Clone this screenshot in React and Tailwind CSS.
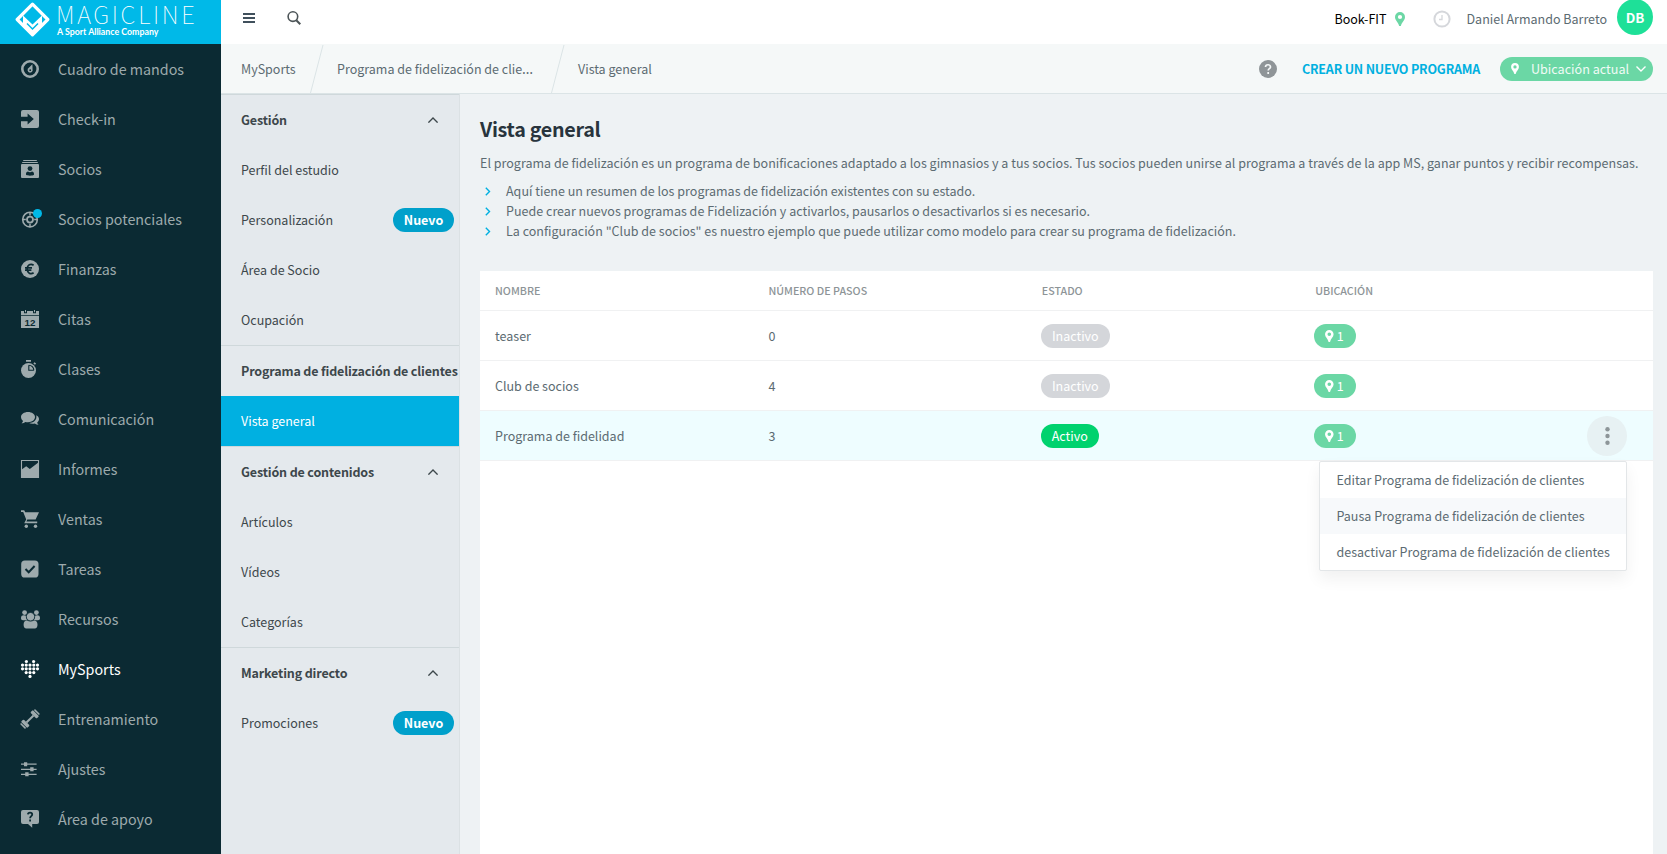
import React from 'react';

const mainNav = [
  { label: 'Cuadro de mandos', icon: 'gauge' },
  { label: 'Check-in', icon: 'checkin' },
  { label: 'Socios', icon: 'members' },
  { label: 'Socios potenciales', icon: 'target', dot: true },
  { label: 'Finanzas', icon: 'euro' },
  { label: 'Citas', icon: 'calendar' },
  { label: 'Clases', icon: 'stopwatch' },
  { label: 'Comunicación', icon: 'chat' },
  { label: 'Informes', icon: 'chart' },
  { label: 'Ventas', icon: 'cart' },
  { label: 'Tareas', icon: 'check' },
  { label: 'Recursos', icon: 'people' },
  { label: 'MySports', icon: 'heart', active: true },
  { label: 'Entrenamiento', icon: 'dumbbell' },
  { label: 'Ajustes', icon: 'sliders' },
  { label: 'Área de apoyo', icon: 'support' },
];

const subNav = [
  {
    title: 'Gestión',
    collapsible: true,
    items: [
      { label: 'Perfil del estudio' },
      { label: 'Personalización', isNew: true },
      { label: 'Área de Socio' },
      { label: 'Ocupación' },
    ],
  },
  {
    title: 'Programa de fidelización de clientes',
    items: [{ label: 'Vista general', active: true }],
  },
  {
    title: 'Gestión de contenidos',
    collapsible: true,
    items: [{ label: 'Artículos' }, { label: 'Vídeos' }, { label: 'Categorías' }],
  },
  {
    title: 'Marketing directo',
    collapsible: true,
    items: [{ label: 'Promociones', isNew: true }],
  },
];

const hints = [
  'Aquí tiene un resumen de los programas de fidelización existentes con su estado.',
  'Puede crear nuevos programas de Fidelización y activarlos, pausarlos o desactivarlos si es necesario.',
  'La configuración "Club de socios" es nuestro ejemplo que puede utilizar como modelo para crear su programa de fidelización.',
];

const programs = [
  { name: 'teaser', steps: 0, active: false, locations: 1 },
  { name: 'Club de socios', steps: 4, active: false, locations: 1 },
  { name: 'Programa de fidelidad', steps: 3, active: true, locations: 1, menuOpen: true },
];

const menuItems = [
  { label: 'Editar Programa de fidelización de clientes' },
  { label: 'Pausa Programa de fidelización de clientes', hover: true },
  { label: 'desactivar Programa de fidelización de clientes' },
];

const BG = '#0b2a33';

// Rows of the dotted heart: [y, list of x]
const heartDots = [
  [1.5, [5.4, 12.6]],
  [5.1, [1.5, 5.2, 9, 12.8, 16.5]],
  [8.8, [1.5, 5.2, 9, 12.8, 16.5]],
  [12.6, [5.2, 9, 12.8]],
  [16.4, [9]],
];

const icons = {
  gauge: (
    <>
      <circle cx="9" cy="9" r="7.7" fill="none" stroke="currentColor" strokeWidth="2.6" />
      <path d="M11.4 4.2 11.6 10.4A2.5 2.5 0 1 1 7.1 8.6Z" />
      <circle cx="9.2" cy="10.2" r="0.9" fill={BG} />
    </>
  ),
  checkin: (
    <path d="M2 0h14a2 2 0 0 1 2 2v14a2 2 0 0 1-2 2H2a2 2 0 0 1-2-2v-4.8h6.6v3.2L12.8 9 6.6 3.6v3.2H0V2a2 2 0 0 1 2-2z" />
  ),
  members: (
    <>
      <path d="M2.2 0h13.6v1H2.2zM1.2 2h15.6v1H1.2zM1 4h16a1 1 0 0 1 1 1v12a1 1 0 0 1-1 1H1a1 1 0 0 1-1-1V5a1 1 0 0 1 1-1z" />
      <circle cx="9" cy="8.6" r="2.4" fill={BG} />
      <path d="M5 14.8c-.3-2.4 1-3 2-3.2 1.2.7 2.8.7 4 0 1 .2 2.3.8 2 3.2-2 1.2-6 1.2-8 0z" fill={BG} />
    </>
  ),
  target: (
    <g fill="none" stroke="currentColor">
      <circle cx="9" cy="9.6" r="7.3" strokeWidth="1.6" />
      <circle cx="9" cy="9.6" r="3" strokeWidth="1.8" />
      <path d="M9 2v3.4M9 13.8v3.4M1.4 9.6h3.4M13.2 9.6h3.4" strokeWidth="1.5" />
    </g>
  ),
  euro: (
    <>
      <circle cx="9" cy="9" r="9" />
      <path
        d="M12.6 5.2C9.6 3.2 6.2 5 6.2 9s3.4 5.8 6.4 3.8M4 7.8h7M4 10.2h6.4"
        fill="none"
        stroke={BG}
        strokeWidth="1.7"
      />
    </>
  ),
  calendar: (
    <>
      <path d="M0 1h3v2.200h3V1h6v2.200h3V1h3v4.200H0z" />
      <path d="M4 0h1v2.200H4zM13 0h1v2.200h-1zM0 6h18v12H0z" />
      <text x="9" y="15.6" textAnchor="middle" fontSize="9.8" fontWeight="700" fontFamily="Liberation Sans, sans-serif" fill={BG}>
        12
      </text>
    </>
  ),
  stopwatch: (
    <>
      <circle cx="7.5" cy="10.5" r="7.5" />
      <path d="M5 0h5v1.8H5zM12.3 3.2l1.4-1 1.4 1.6-1.2 1z" />
      <path d="M7.8 5.2v5h5" fill="none" stroke={BG} strokeWidth="1.1" />
      <path d="M7.8 5.2a5 5 0 0 1 5 5" fill="none" stroke={BG} strokeWidth="1.1" />
    </>
  ),
  chat: (
    <>
      <path d="M7 2c4 0 7 2.2 7 5.1s-3 5.1-7 5.1c-.9 0-1.8-.1-2.6-.3-1 .8-2.3 1.3-3.9 1.3.8-.7 1.400-1.500 1.500-2.300C.8 10 0 8.600 0 7.100 0 4.200 3 2 7 2z" />
      <path d="M15.200 5.200c1.700.8 2.800 2.200 2.800 3.800 0 1.400-.7 2.500-1.800 3.400.1.8.6 1.700 1.400 2.400-1.500 0-2.800-.4-3.800-1.200-2 .5-4.200.3-5.800-.5 4.400-.2 7.400-2.700 7.400-6 0-.7 0-1.300-.2-1.900z" />
    </>
  ),
  chart: (
    <>
      <path d="M.5.5h17v17H.5z" fill="none" stroke="currentColor" strokeWidth="1.1" />
      <path d="M0 10 5.2 6.2 8.8 9 18 2v16H0z" />
    </>
  ),
  cart: (
    <>
      <path d="M0 .2h3.200l1 2H18l-3.400 7.400H6.300l-.9 1.900h10.800v1.700H3.200l2-3.800L2.200 1.900H0z" />
      <circle cx="5.3" cy="16.3" r="1.7" />
      <circle cx="14.5" cy="16.3" r="1.7" />
    </>
  ),
  check: (
    <>
      <rect x="0.2" y="0.5" width="17.3" height="17" rx="3.6" />
      <path d="m4.500 9 3.200 3.200L13.600 6" fill="none" stroke={BG} strokeWidth="2" />
    </>
  ),
  people: (
    <>
      <circle cx="3.6" cy="2.6" r="2.4" />
      <circle cx="15.4" cy="2.6" r="2.4" />
      <path d="M0 8c0-2 1.200-2.700 2.600-2.700 1.200 0 2 .3 2.700.7-.2 1.800 0 3 .9 4.200H2C.7 10.200 0 9.500 0 8zM19 8c0-2-1.200-2.700-2.600-2.700-1.200 0-2 .3-2.700.7.2 1.800 0 3-.9 4.200H17c1.300 0 2-.7 2-2.200z" />
      <circle cx="9.5" cy="6.7" r="4.2" stroke={BG} strokeWidth="0.8" />
      <path d="M2.600 14.800c0-3 1.400-4.200 3.400-4.200 2.200 1.300 4.800 1.300 7 0 2 0 3.500 1.200 3.500 4.200 0 2.400-1 3.600-2.700 3.600H5.300c-1.700 0-2.700-1.200-2.700-3.600z" />
    </>
  ),
  heart: (
    <>
      {heartDots.map(([y, xs]) => xs.map((x) => <circle key={`${x}-${y}`} cx={x} cy={y} r="1.6" />))}
    </>
  ),
  dumbbell: (
    <g transform="rotate(-45 9 9)">
      <path d="M4 8h10v2H4z" />
      <rect x="0.6" y="4.6" width="3.6" height="8.8" rx="1" />
      <rect x="-1.6" y="5.4" width="1.6" height="7.200" rx="0.8" />
      <rect x="13.8" y="4.6" width="3.6" height="8.8" rx="1" />
      <rect x="18" y="5.4" width="1.6" height="7.200" rx="0.8" />
    </g>
  ),
  sliders: (
    <path d="M0 3.600h15.600v1.200H0zM0 8.700h15.600v1.200H0zM0 13.700h15.600v1.200H0zM3 2.200h3.200v4H3zM9.200 7.300h3.400v4H9.200zM4.200 12.300h3.400v4H4.200z" />
  ),
  support: (
    <>
      <path d="M2 0h14a2 2 0 0 1 2 2v10a2 2 0 0 1-2 2h-4.800v3.700L7 14H2a2 2 0 0 1-2-2V2a2 2 0 0 1 2-2z" />
      <path d="M6.900 4.400c.2-2.300 4.300-2.300 4.300.2 0 1.600-2.100 1.600-2.100 3.600M9.100 9.500v2" fill="none" stroke={BG} strokeWidth="1.8" />
    </>
  ),
};

function NavIcon({ name }) {
  return (
    <svg width="18" height="18" viewBox="0 0 18 18" fill="currentColor" className="overflow-visible">
      {icons[name]}
    </svg>
  );
}

function Pin({ className }) {
  return (
    <svg viewBox="0 0 10 14" fill="currentColor" className={className}>
      <path fillRule="evenodd" d="M5 0a5 5 0 0 1 5 5c0 3.200-3.200 5.200-4 8.400a1 1 0 0 1-2 0C3.200 10.200 0 8.200 0 5a5 5 0 0 1 5-5zm0 2.900a2.100 2.100 0 1 0 0 4.200 2.100 2.100 0 0 0 0-4.200z" />
    </svg>
  );
}

function Logo() {
  return (
    <div className="flex h-11 shrink-0 bg-[#00b9e8] pl-[15px] text-white">
      <svg width="35" height="35" viewBox="0 0 35 35" className="mt-[2px] shrink-0">
        <path d="M17.500 2.200 32.800 17.500 17.500 32.800 2.200 17.500Z" fill="none" stroke="#fff" strokeWidth="3.2" strokeLinejoin="round" />
        <path d="M8 13.500 17.500 22.500 27 13.500V23L17.500 32.500 8 23Z" fill="#fff" />
        <path d="M12 21.500 17.500 27 23 21.500" fill="none" stroke="#00b9e8" strokeWidth="1.5" />
      </svg>
      <div className="ml-[6px]">
        <div className="mt-[3px] h-[22px] text-[24px] leading-[22px] font-thin tracking-[2.65px] whitespace-nowrap">MAGICLINE</div>
        <div className="mt-[1px] ml-px font-['Lato'] text-[8.8px] leading-[12px] font-bold whitespace-nowrap">A Sport Alliance Company</div>
      </div>
    </div>
  );
}

function Sidebar() {
  return (
    <aside className="flex w-[221px] shrink-0 flex-col bg-[#0b2a33]">
      <Logo />
      <nav>
        {mainNav.map((item) => (
          <a
            key={item.label}
            className={`flex h-[50px] items-center pl-[21px] text-[14.3px] ${item.active ? 'text-white' : 'text-[#9eaaad]'}`}
          >
            <span className="relative mr-[19px] w-[18px]">
              <NavIcon name={item.icon} />
              {item.dot && <span className="absolute top-[-1px] left-[12px] h-[9px] w-[9px] rounded-full bg-[#00b9e8]" />}
            </span>
            <span>{item.label}</span>
          </a>
        ))}
      </nav>
    </aside>
  );
}

function TopBar() {
  return (
    <header className="flex h-11 shrink-0 items-start justify-between bg-white pr-[14px] pl-[22px]">
      <div className="flex">
        <svg width="12" height="10" viewBox="0 0 12 10" fill="#40505c" className="mt-[13px]">
          <path d="M0 0h12v2H0zM0 4h12v2H0zM0 8h12v2H0z" />
        </svg>
        <svg width="14" height="14" viewBox="0 0 14 14" fill="none" stroke="#4c5457" className="mt-[11px] ml-[32px]">
          <circle cx="5.9" cy="5.6" r="4.8" strokeWidth="1.6" />
          <path d="m9.300 9.200 4 4" strokeWidth="2" />
        </svg>
      </div>
      <div className="flex h-[38px] items-center text-[12.5px]">
        <span className="text-black">Book-FIT</span>
        <Pin className="ml-[8px] h-[14px] w-[10px] text-[#6cd7a5]" />
        <svg width="18" height="18" viewBox="0 0 18 18" fill="none" stroke="#d5d7db" className="mr-[16px] ml-[28px]">
          <circle cx="9" cy="9" r="7.6" strokeWidth="2" />
          <path d="M9 5v4.500H6" strokeWidth="1.3" />
        </svg>
        <span className="text-[#5c6b72]">Daniel Armando Barreto</span>
        <span className="mt-[-5px] ml-[10px] flex h-9 w-9 items-center justify-center rounded-full bg-[#1ee098] text-[13.4px] font-bold text-white">
          DB
        </span>
      </div>
    </header>
  );
}

function Slash({ className }) {
  return (
    <svg width="14" height="49" viewBox="0 0 14 49" className={className}>
      <path d="M13 1 .5 49" stroke="#dbe4e6" fill="none" />
    </svg>
  );
}

function Breadcrumbs() {
  return (
    <div className="flex h-[50px] shrink-0 items-center border-b border-[#dbe4e6] bg-[#f5f8f8] pr-[14px] pl-5 text-[12.5px] text-[#5c6b72]">
      <span className="w-[54px] whitespace-nowrap">MySports</span>
      <Slash className="ml-[15px]" />
      <span className="ml-[13px] w-[199px] whitespace-nowrap">
        Programa de fidelización de clie<span className="font-['Noto_Sans'] text-[14px]">…</span>
      </span>
      <Slash className="ml-[15px]" />
      <span className="ml-[13px]">Vista general</span>
      <div className="ml-auto flex items-center">
        <svg width="18" height="18" viewBox="0 0 18 18">
          <circle cx="9" cy="9" r="9" fill="#8f9598" />
          <path d="M6.500 7c.1-3 5-3 5 0 0 1.700-2.300 1.700-2.300 3.500M9.200 12v2" fill="none" stroke="#f5f8f8" strokeWidth="1.7" />
        </svg>
        <span className="ml-[25px] font-semibold tracking-[-0.19px] whitespace-nowrap text-[#00b0e0]">CREAR UN NUEVO PROGRAMA</span>
        <div className="ml-[20px] flex h-6 w-[153px] items-center rounded-full bg-[#6bd7a5] pl-[11px] text-[#f0fbf6]">
          <Pin className="h-[11px] w-[8px] text-white" />
          <span className="ml-[12px] text-[12.6px] whitespace-nowrap">Ubicación actual</span>
          <svg width="10" height="6" viewBox="0 0 10 6" fill="none" stroke="#fff" strokeWidth="1.4" className="ml-[7px]">
            <path d="m.5.5 4.500 4.500L9.500.5" />
          </svg>
        </div>
      </div>
    </div>
  );
}

function SubNav() {
  return (
    <div className="w-[239px] shrink-0 border-r border-[#dbe1e4] bg-[#e4e9ed] text-[12.5px] text-[#3d474b]">
      {subNav.map((group) => (
        <section key={group.title} className="border-t border-[#cfd8db]">
          <h2 className="flex h-[50px] items-center justify-between pl-5 font-semibold tracking-[-0.15px] whitespace-nowrap">
            {group.title}
            {group.collapsible && (
              <svg width="10" height="6" viewBox="0 0 10 6" fill="none" stroke="#3d474b" strokeWidth="1.4" className="mr-[21px]">
                <path d="m.4 5.600 4.600-4.600 4.600 4.600" />
              </svg>
            )}
          </h2>
          {group.items.map((item) => (
            <a
              key={item.label}
              className={`flex h-[50px] items-center justify-between pr-[5px] pl-5 ${item.active ? 'bg-[#00b0e1] text-white' : ''}`}
            >
              {item.label}
              {item.isNew && (
                <span className="flex h-6 w-[61px] items-center justify-center rounded-full bg-[#00a0cb] font-semibold text-white">
                  Nuevo
                </span>
              )}
            </a>
          ))}
        </section>
      ))}
    </div>
  );
}

function ActionMenu() {
  return (
    <div className="absolute top-[50px] right-[26px] z-10 w-[308px] rounded-[2px] border border-[#e3e6e8] bg-white shadow-[0_8px_16px_rgba(0,0,0,0.06)]">
      {menuItems.map((item) => (
        <div
          key={item.label}
          className={`flex h-9 items-center pl-[16.5px] tracking-[0.01px] whitespace-nowrap text-[#5c6b72] ${item.hover ? 'bg-[#f7f9fb]' : ''}`}
        >
          {item.label}
        </div>
      ))}
    </div>
  );
}

function ProgramTable() {
  return (
    <div className="mt-[30px] flex-1 bg-white text-[12.5px] text-[#5c6b72]">
      <div className="grid h-10 grid-cols-[273.4px_273.4px_273.4px_1fr] items-center border-b border-[#f0f1f2] pl-[15px] text-[10.7px] font-medium text-[#8d9497]">
        <span>NOMBRE</span>
        <span>NÚMERO DE PASOS</span>
        <span>ESTADO</span>
        <span>UBICACIÓN</span>
      </div>
      {programs.map((program) => (
        <div
          key={program.name}
          className={`relative grid h-[50px] grid-cols-[273.4px_273.4px_273.4px_1fr_66px] items-center border-b border-[#f0f1f2] pl-[15px] ${program.menuOpen ? 'bg-[#eefdff]' : ''}`}
        >
          <span>{program.name}</span>
          <span>{program.steps}</span>
          <span className="flex">
            <span
              className={`-ml-px flex h-6 items-center justify-center rounded-full text-white ${program.active ? 'w-[58px] bg-[#00d26e]' : 'w-[69px] bg-[#d4d6da]'}`}
            >
              {program.active ? 'Activo' : 'Inactivo'}
            </span>
          </span>
          <span className="flex">
            <span className="-ml-px flex h-6 w-[42px] items-center rounded-full bg-[#6bd7a5] pl-[11px] text-white">
              <Pin className="mr-[3px] h-[12px] w-[8.6px]" />
              {program.locations}
            </span>
          </span>
          {program.menuOpen && (
            <>
              <button className="flex h-10 w-10 items-center justify-center rounded-full bg-[#e7f1f3]">
                <svg width="5" height="18" viewBox="0 0 5 18" fill="#8d9598">
                  <circle cx="2.5" cy="2.3" r="2.2" />
                  <circle cx="2.5" cy="9" r="2.2" />
                  <circle cx="2.5" cy="15.7" r="2.2" />
                </svg>
              </button>
              <ActionMenu />
            </>
          )}
        </div>
      ))}
    </div>
  );
}

function Overview() {
  return (
    <main className="flex flex-1 flex-col bg-[#eef2f4] pr-[14px] pl-5">
      <h1 className="mt-[20px] text-[19.7px] leading-[30px] font-semibold tracking-[-0.28px] text-[#28343d]">Vista general</h1>
      <p className="mt-[9px] text-[12.5px] leading-[20px] tracking-[0.018px] whitespace-nowrap text-[#5c6b72]">
        El programa de fidelización es un programa de bonificaciones adaptado a los gimnasios y a tus socios. Tus socios
        pueden unirse al programa a través de la app MS, ganar puntos y recibir recompensas.
      </p>
      <ul className="mt-[8px] text-[12.5px] leading-[20px] tracking-[0.015px] text-[#5c6b72]">
        {hints.map((hint) => (
          <li key={hint} className="flex items-center">
            <svg width="6" height="9" viewBox="0 0 6 9" fill="none" stroke="#00b0e1" strokeWidth="1.4" className="mr-[15px] ml-[5px]">
              <path d="m.8.8 3.700 3.700L.8 8.200" />
            </svg>
            {hint}
          </li>
        ))}
      </ul>
      <ProgramTable />
    </main>
  );
}

export default function App() {
  return (
    <div className="flex h-[854px] w-[1667px] overflow-hidden font-['Noto_Sans_CJK_SC','Noto_Sans',sans-serif] leading-5">
      <Sidebar />
      <div className="flex min-w-0 flex-1 flex-col">
        <TopBar />
        <Breadcrumbs />
        <div className="flex min-h-0 flex-1">
          <SubNav />
          <Overview />
        </div>
      </div>
    </div>
  );
}
